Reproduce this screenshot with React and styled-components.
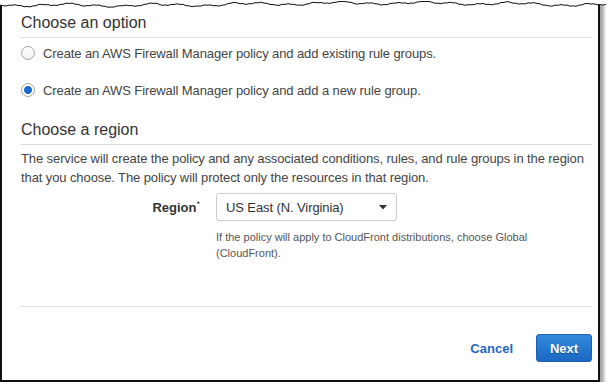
import React from 'react';
import styled, { createGlobalStyle } from 'styled-components';

const GlobalStyle = createGlobalStyle`
    html, body {
        margin:0;
        padding:0;
        background:#fff;
    }
    body {
        font-family:"Liberation Sans", Arial, sans-serif;
    }
`

// torn paper edge along the top of the screenshot
const tearPoints = (() => {
    const pts = []
    for (let x = 0; x <= 606; x += 3) {
        const y = 4.2
            + Math.sin(x * 0.07) * 1.1
            + Math.sin(x * 0.23 + 1.3) * 0.9
            + Math.sin(x * 0.011 + 0.4) * 1.2
            + ((x * 7919) % 13) / 13 - 0.5
        pts.push([x, Math.max(1.5, Math.min(8, y))])
    }
    return pts
})()

const TornEdge = () => {
    const line = tearPoints.map(([x, y]) => `${x},${y.toFixed(1)}`).join(' ')
    const fill = `0,0 ${line} 606,0`
    return (
        <TearSvg width="606" height="12" viewBox="0 0 606 12">
            <polygon points={fill} fill="#fff" />
            <polyline points={line} fill="none" stroke="#111" strokeWidth="1" />
        </TearSvg>
    )
}

const Caret = () => (
    <svg width="8" height="5" viewBox="0 0 8 5">
        <path d="M0 0 L8 0 L4 4.5 Z" fill="#333" />
    </svg>
)

const App = () => {
    return <>
        <GlobalStyle />
        <Frame>
            <TornEdge />

            <SectionTitle>Choose an option</SectionTitle>
            <Options>
                <Option>
                    <Radio />
                    <span>Create an AWS Firewall Manager policy and add existing rule groups.</span>
                </Option>
                <Option>
                    <Radio checked />
                    <span>Create an AWS Firewall Manager policy and add a new rule group.</span>
                </Option>
            </Options>

            <SectionTitle spaced>Choose a region</SectionTitle>
            <Description>
                The service will create the policy and any associated conditions, rules, and rule groups in the region
                that you choose. The policy will protect only the resources in that region.
            </Description>

            <FieldGrid>
                <Label>Region<sup>*</sup></Label>
                <Select>
                    <span>US East (N. Virginia)</span>
                    <Caret />
                </Select>
                <div />
                <Help>
                    If the policy will apply to CloudFront distributions, choose Global (CloudFront).
                </Help>
            </FieldGrid>

            <Divider />

            <Actions>
                <LinkButton>Cancel</LinkButton>
                <PrimaryButton>Next</PrimaryButton>
            </Actions>
        </Frame>
    </>
};

export default App;

const Frame = styled.div`
    position:relative;
    box-sizing:border-box;
    width:600px;
    padding:13px 6px 18px 19px;
    border-left:2px solid #111;
    border-right:2px solid #111;
    border-bottom:2px solid #111;
    background:#fff;
    box-shadow:4px 4px 3px rgba(0,0,0,0.35);
    display:flex;
    flex-direction:column;
`

const TearSvg = styled.svg`
    position:absolute;
    top:0;
    left:-2px;
    display:block;
`

const SectionTitle = styled.div`
    margin-top:${p => p.spaced ? '20px' : '0'};
    font-size:16px;
    line-height:20px;
    color:#333;
    padding-bottom:4px;
    border-bottom:1px solid #ddd;
`

const Options = styled.div`
    margin-top:5px;
    display:flex;
    flex-direction:column;
    gap:17px;
`

const Option = styled.label`
    display:flex;
    align-items:center;
    gap:8px;
    height:20px;
    font-size:13px;
    letter-spacing:-0.1px;
    color:#444;
`

const Radio = styled.span`
    box-sizing:border-box;
    width:14px;
    height:14px;
    border-radius:50%;
    border:1px solid #a6a6a6;
    background:${p => p.checked
        ? 'radial-gradient(circle, #1a6dd0 0 3.6px, #fff 4.3px)'
        : 'linear-gradient(#fff, #f1f1f1)'};
    flex:none;
`

const Description = styled.p`
    margin:4px 0 0;
    font-size:13px;
    line-height:19px;
    letter-spacing:-0.1px;
    color:#444;
`

const FieldGrid = styled.div`
    margin-top:6px;
    display:grid;
    grid-template-columns:179px 330px;
    column-gap:16px;
    row-gap:8px;
    align-items:center;
`

const Label = styled.div`
    text-align:right;
    font-size:13px;
    font-weight:700;
    color:#333;

    & > sup {
        font-size:9px;
        font-weight:400;
        vertical-align:top;
        position:relative;
        top:-1px;
    }
`

const Select = styled.div`
    box-sizing:border-box;
    width:181px;
    height:28px;
    padding:0 9px 0 9px;
    border:1px solid #ccc;
    border-radius:3px;
    display:flex;
    align-items:center;
    justify-content:space-between;
    font-size:13px;
    letter-spacing:-0.1px;
    color:#333;
`

const Help = styled.div`
    font-size:11px;
    line-height:16px;
    color:#555;
`

const Divider = styled.div`
    margin-top:45px;
    border-bottom:1px solid #ddd;
`

const Actions = styled.div`
    margin-top:27px;
    display:flex;
    justify-content:flex-end;
    align-items:center;
    gap:23px;
`

const LinkButton = styled.span`
    font-size:13px;
    font-weight:700;
    color:#1f67c4;
`

const PrimaryButton = styled.button`
    box-sizing:border-box;
    height:28px;
    width:56px;
    padding:0;
    border:1px solid #1d60b0;
    border-radius:3px;
    background:linear-gradient(#3389de, #1a68c3);
    color:#fff;
    font-family:"Liberation Sans", Arial, sans-serif;
    font-size:13px;
    font-weight:700;
    text-shadow:0 1px 1px rgba(0,0,0,0.35);
`
